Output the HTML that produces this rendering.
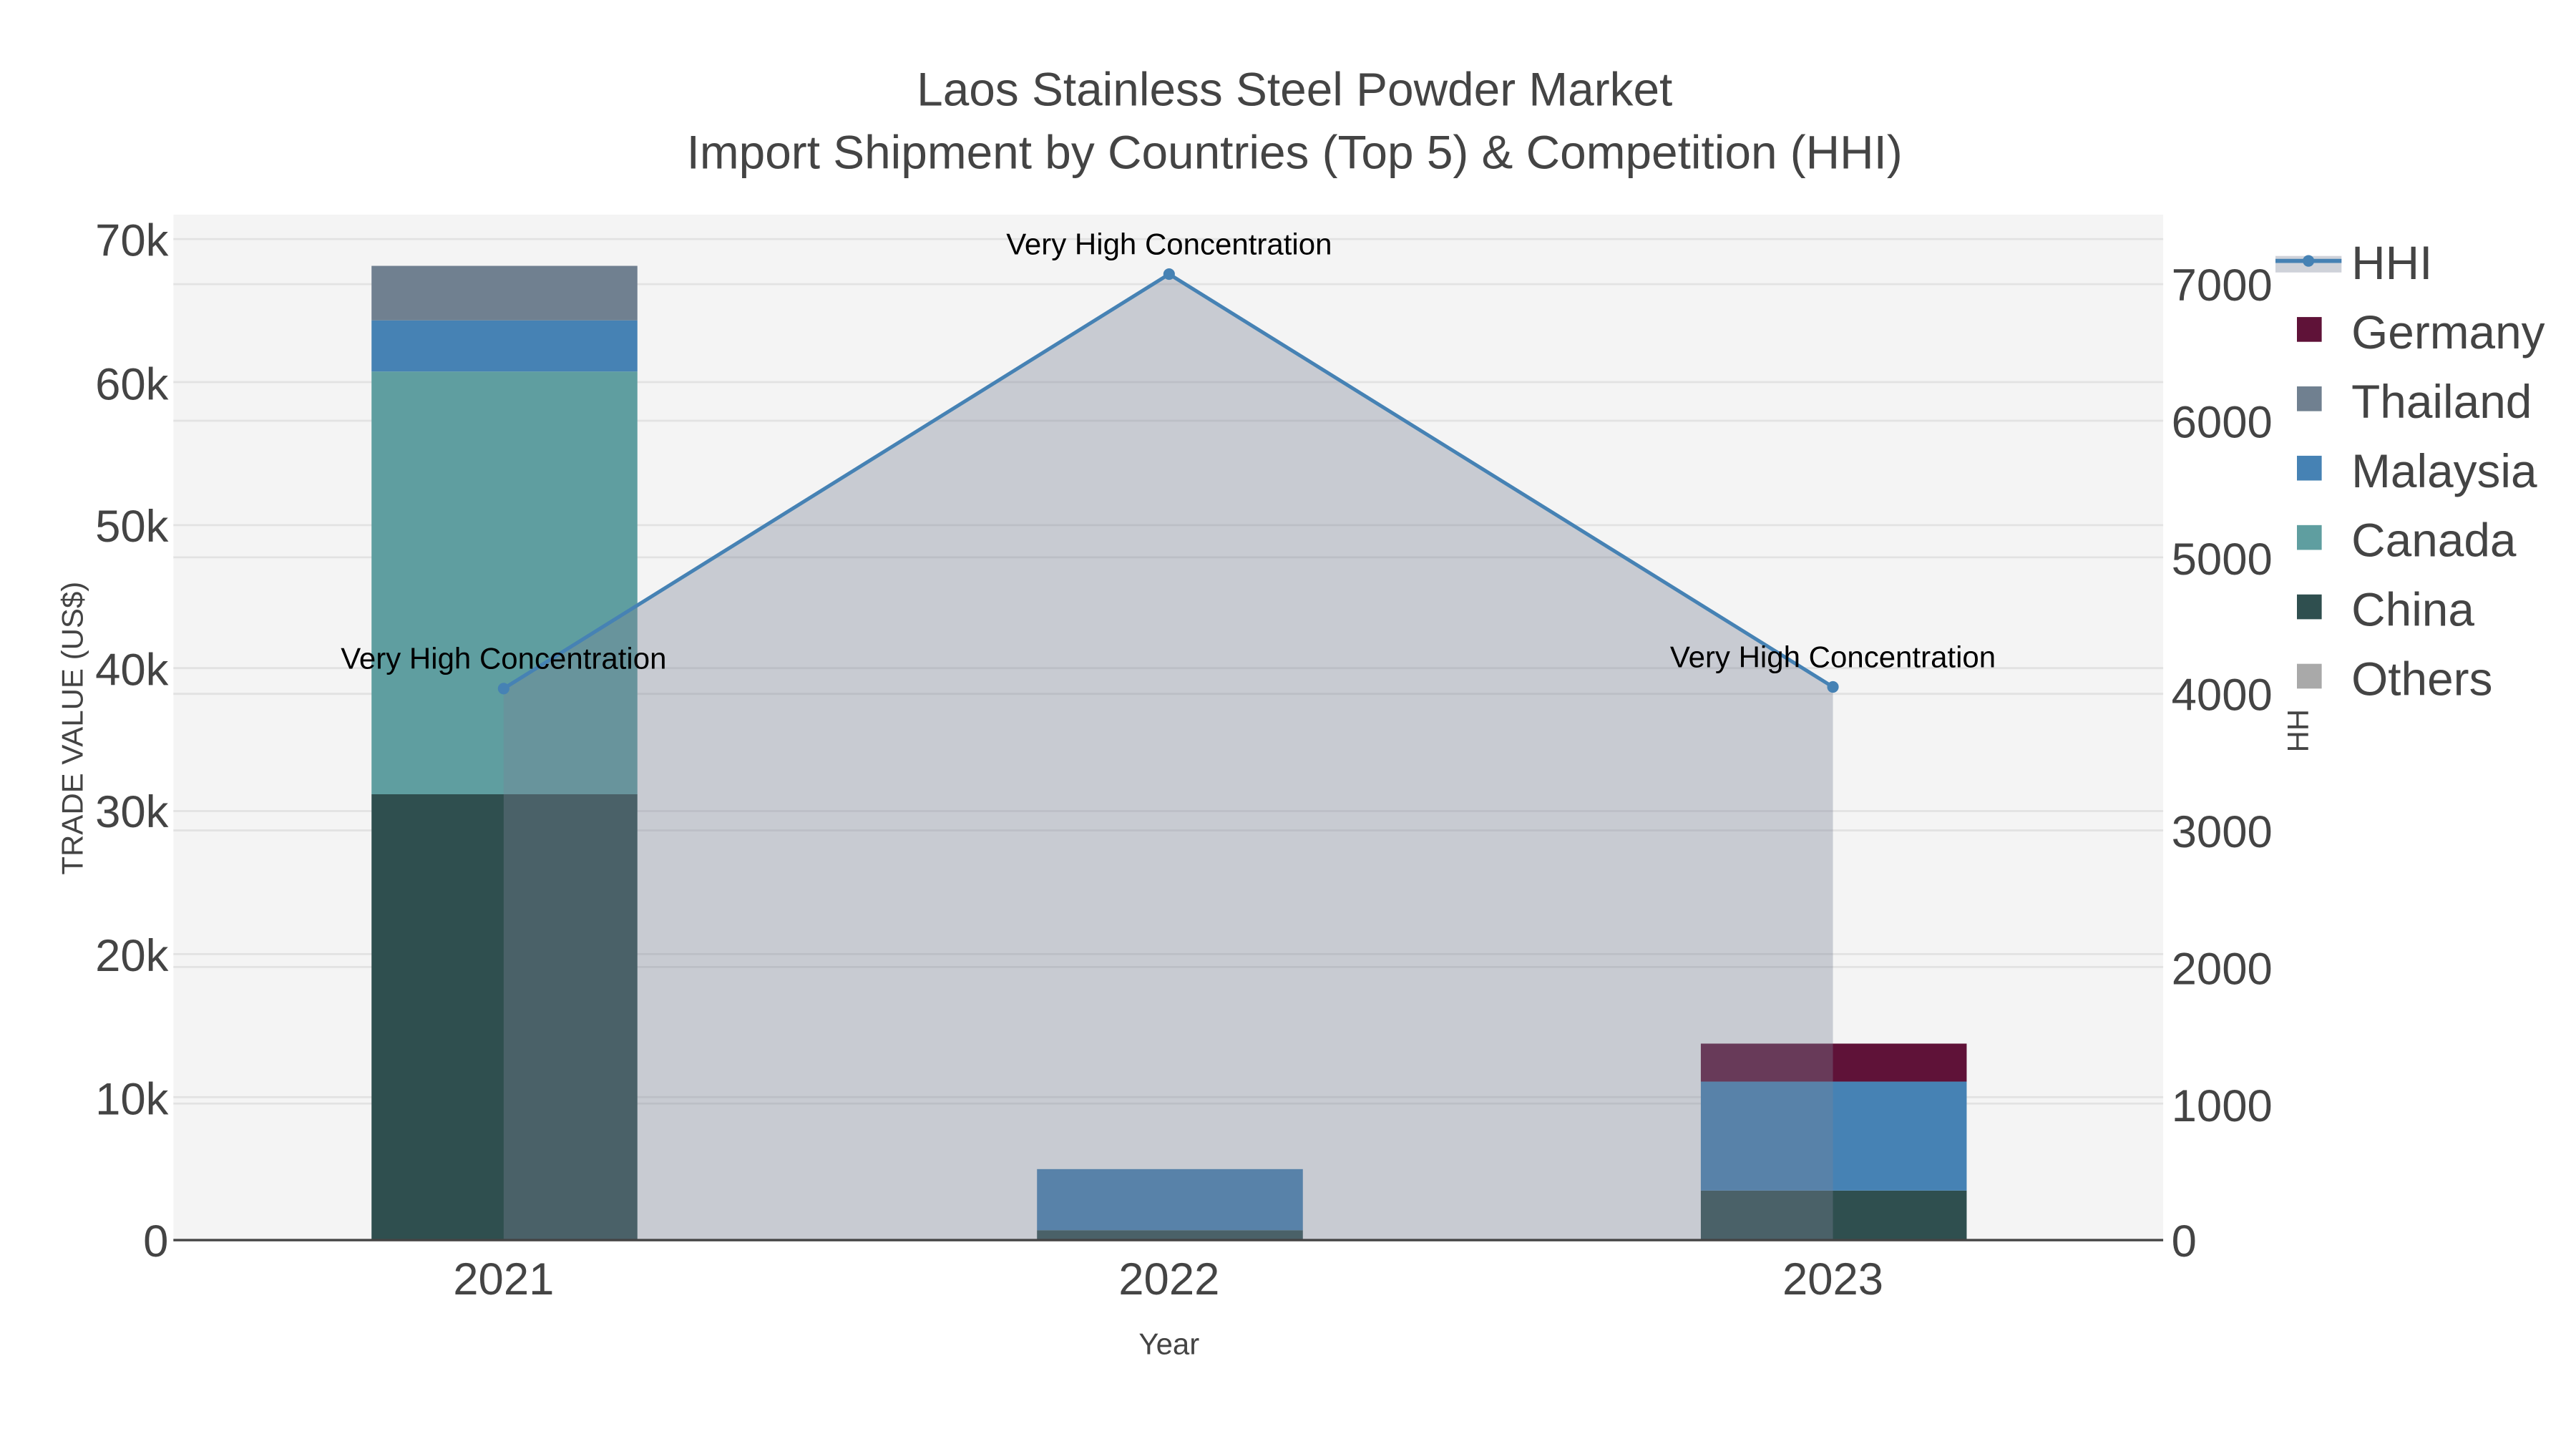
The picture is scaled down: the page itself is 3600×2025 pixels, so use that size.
<!DOCTYPE html>
<html><head><meta charset="utf-8"><style>
html,body{margin:0;padding:0;background:#fff;}
svg{display:block;font-family:"Liberation Sans",sans-serif;}
</style></head><body>
<svg width="3600" height="2025" viewBox="0 0 1560 877.5" preserveAspectRatio="none" xmlns="http://www.w3.org/2000/svg">
<rect x="0" y="0" width="1560" height="877.5" fill="#fff"/>
<text x="784" y="64" text-anchor="middle" font-size="28.5" fill="#444">Laos Stainless Steel Powder Market</text>
<text x="784" y="102" text-anchor="middle" font-size="28.5" fill="#444">Import Shipment by Countries (Top 5) &amp; Competition (HHI)</text>
<rect x="105" y="130" width="1205" height="621" fill="#f4f4f4"/>
<g stroke="#e2e2e2" stroke-width="1.2">
<line x1="105" x2="1310" y1="664.4" y2="664.4"/><line x1="105" x2="1310" y1="577.8" y2="577.8"/>
<line x1="105" x2="1310" y1="491.2" y2="491.2"/><line x1="105" x2="1310" y1="404.6" y2="404.6"/>
<line x1="105" x2="1310" y1="318" y2="318"/><line x1="105" x2="1310" y1="231.4" y2="231.4"/>
<line x1="105" x2="1310" y1="144.8" y2="144.8"/>
<line x1="105" x2="1310" y1="668.3" y2="668.3"/><line x1="105" x2="1310" y1="585.6" y2="585.6"/>
<line x1="105" x2="1310" y1="502.9" y2="502.9"/><line x1="105" x2="1310" y1="420.2" y2="420.2"/>
<line x1="105" x2="1310" y1="337.5" y2="337.5"/><line x1="105" x2="1310" y1="254.8" y2="254.8"/>
<line x1="105" x2="1310" y1="172.1" y2="172.1"/>
</g>
<rect x="225" y="481" width="161" height="270" fill="#2f4f4f"/>
<rect x="225" y="225" width="161" height="256" fill="#5f9ea0"/>
<rect x="225" y="194" width="161" height="31" fill="#4682b4"/>
<rect x="225" y="161" width="161" height="33" fill="#708090"/>
<rect x="628" y="745" width="161" height="6" fill="#2f4f4f"/>
<rect x="628" y="708" width="161" height="37" fill="#4682b4"/>
<rect x="1030" y="721" width="161" height="30" fill="#2f4f4f"/>
<rect x="1030" y="655" width="161" height="66" fill="#4682b4"/>
<rect x="1030" y="632" width="161" height="23" fill="#5f1238"/>
<polygon points="305,417 708,166 1110,416 1110,751 305,751" fill="rgba(122,130,150,0.36)"/>
<polyline points="305,417 708,166 1110,416" fill="none" stroke="#4682b4" stroke-width="2.2"/>
<circle cx="305" cy="417" r="3.5" fill="#4682b4"/><circle cx="708" cy="166" r="3.5" fill="#4682b4"/><circle cx="1110" cy="416" r="3.5" fill="#4682b4"/>
<line x1="105" x2="1310" y1="751" y2="751" stroke="#444" stroke-width="1.5"/>
<g font-size="18.2" fill="#000" text-anchor="middle">
<text x="305" y="405">Very High Concentration</text>
<text x="708" y="154">Very High Concentration</text>
<text x="1110" y="404">Very High Concentration</text>
</g>
<g font-size="27.5" fill="#444" text-anchor="end">
<text x="102" y="761">0</text><text x="102" y="675">10k</text><text x="102" y="588">20k</text>
<text x="102" y="501">30k</text><text x="102" y="415">40k</text><text x="102" y="328">50k</text>
<text x="102" y="242">60k</text><text x="102" y="155">70k</text>
</g>
<g font-size="27.5" fill="#444">
<text x="1315" y="761">0</text><text x="1315" y="679">1000</text><text x="1315" y="596">2000</text>
<text x="1315" y="513">3000</text><text x="1315" y="430">4000</text><text x="1315" y="348">5000</text>
<text x="1315" y="265">6000</text><text x="1315" y="182">7000</text>
</g>
<g font-size="27.5" fill="#444" text-anchor="middle">
<text x="305" y="784">2021</text><text x="708" y="784">2022</text><text x="1110" y="784">2023</text>
</g>
<text x="708" y="820" text-anchor="middle" font-size="18.2" fill="#444">Year</text>
<text transform="translate(50,441) rotate(-90)" text-anchor="middle" font-size="18.2" fill="#444">TRADE VALUE (US$)</text>
<text transform="translate(1398,440) rotate(-90)" text-anchor="middle" font-size="18.2" fill="#444">HHI</text>
<rect x="1376" y="130" width="184" height="300" fill="#fff"/>
<rect x="1378" y="155" width="40" height="10" fill="rgba(122,130,150,0.36)"/>
<line x1="1378" x2="1418" y1="158" y2="158" stroke="#4682b4" stroke-width="2.5"/>
<circle cx="1398" cy="158" r="3.5" fill="#4682b4"/>
<g font-size="28.5" fill="#444">
<text x="1424" y="169">HHI</text>
<text x="1424" y="211">Germany</text>
<text x="1424" y="253">Thailand</text>
<text x="1424" y="295">Malaysia</text>
<text x="1424" y="337">Canada</text>
<text x="1424" y="379">China</text>
<text x="1424" y="421">Others</text>
</g>
<rect x="1391" y="192" width="15" height="15" fill="#5f1238"/>
<rect x="1391" y="234" width="15" height="15" fill="#708090"/>
<rect x="1391" y="276" width="15" height="15" fill="#4682b4"/>
<rect x="1391" y="318" width="15" height="15" fill="#5f9ea0"/>
<rect x="1391" y="360" width="15" height="15" fill="#2f4f4f"/>
<rect x="1391" y="402" width="15" height="15" fill="#a9a9a9"/>
</svg>
</body></html>
